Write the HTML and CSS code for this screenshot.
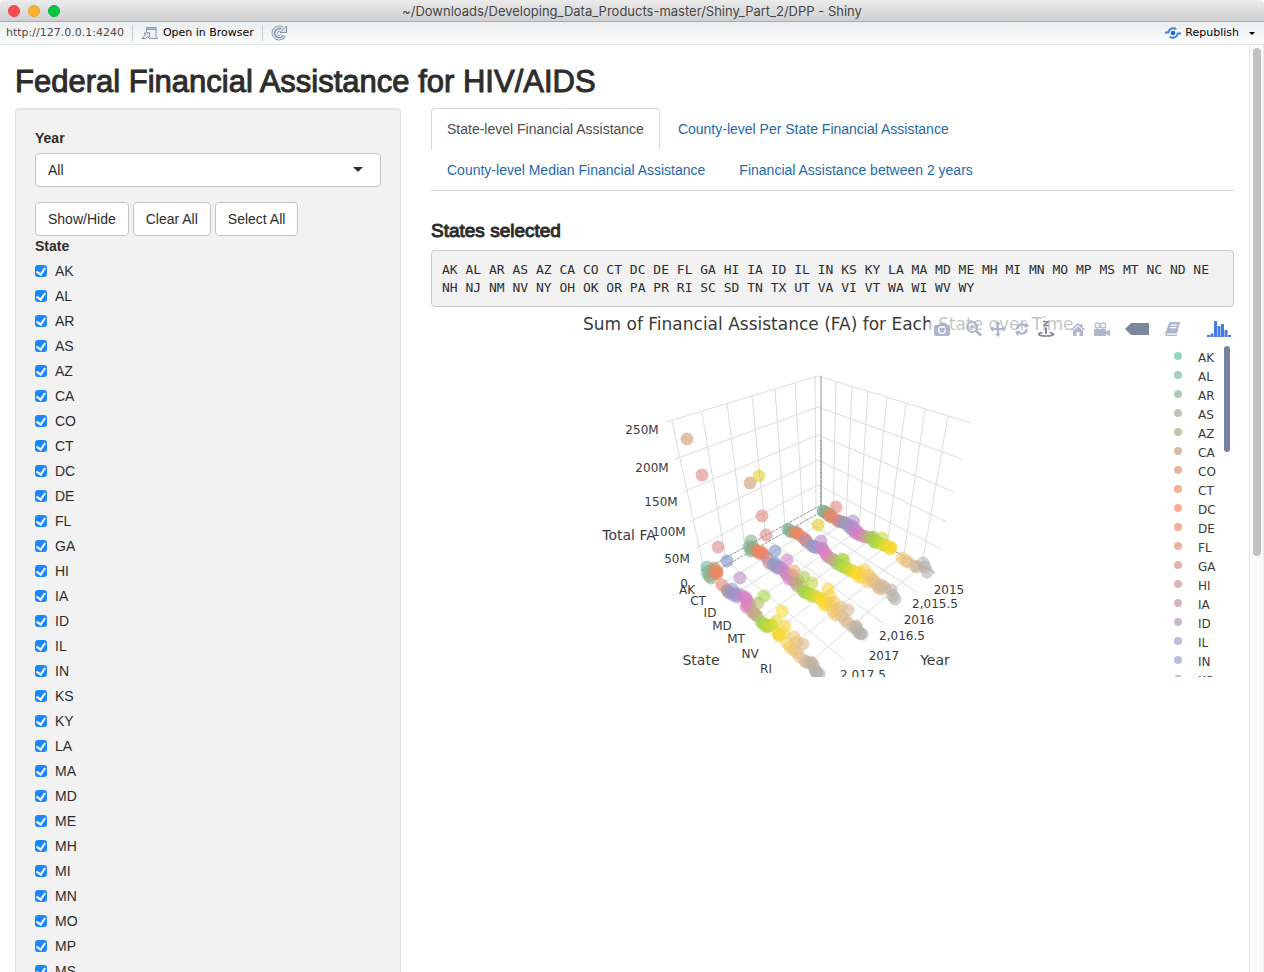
FILE: index.html
```
<!DOCTYPE html>
<html lang="en">
<head>
<meta charset="utf-8">
<title>~/Downloads/Developing_Data_Products-master/Shiny_Part_2/DPP - Shiny</title>
<link rel="stylesheet" href="styles.css">
</head>
<body>
<header class="titlebar">
  <div class="lights"><span class="light red"></span><span class="light amber"></span><span class="light green"></span></div>
  <div class="window-title">~/Downloads/Developing_Data_Products-master/Shiny_Part_2/DPP - Shiny</div>
</header>
<nav class="toolbar">
  <span class="url">http://127.0.0.1:4240</span>
  <span class="sep"></span>
  <button class="tool open" type="button">
    <svg width="18" height="14" viewBox="0 0 18 14"><path d="M5.500 1.500h9.500v9.500q0 1.500 2 1.500H8" fill="#eef4fa" stroke="#8a9bb0"/><path d="M5.500 1.500h9.500v2h-9.500z" fill="#a9cdeb" stroke="#8a9bb0"/><path d="M5.500 3v3" stroke="#8a9bb0"/><path d="M1 12.500l3.500-3.700L3 7.300l5.500-.5-.5 5-1.500-1.400-2 2.100z" fill="#fff" stroke="#6d8199"/></svg>
    Open in Browser</button>
  <span class="sep"></span>
  <button class="tool" type="button" aria-label="Reload">
    <svg width="17" height="16" viewBox="0 0 17 16"><path d="M11.500 3A6 6 0 1 0 13.500 10.500M10.500 10A3 3 0 1 1 9 5.500" fill="none" stroke="#8493ab" stroke-width="3"/><path d="M11.500 3A6 6 0 1 0 13.500 10.500M10.500 10A3 3 0 1 1 9 5.500" fill="none" stroke="#dbe6f5" stroke-width="1.400"/><path d="M15.500 1v6.500H9z" fill="#dbe6f5" stroke="#8493ab"/></svg>
  </button>
  <button class="tool republish" type="button">
    <svg width="16" height="12" viewBox="0 0 16 12"><circle cx="8" cy="6" r="2.300" fill="#1a66d9"/><path d="M0 5.500h3.200C4.200 2.500 6 1.300 8 1.300q2 0 3.300 1M16 6.500h-3.200C11.800 9.500 10 10.700 8 10.700q-2 0-3.300-1" fill="none" stroke="#3f83d6" stroke-width="1.900"/></svg>
    Republish
    <svg class="caret" width="6" height="3" viewBox="0 0 6 3"><path d="M0 0h6L3 3z"/></svg>
  </button>
</nav>
<div class="viewport">
  <div class="page">
    <h2 class="page-title">Federal Financial Assistance for HIV/AIDS</h2>
    <div class="columns">
      <form class="sidebar">
        <label class="field-label" for="year">Year</label>
        <div class="select-wrap"><select id="year"><option>All</option></select></div>
        <div class="buttons">
          <button class="btn" type="button">Show/Hide</button>
          <button class="btn" type="button">Clear All</button>
          <button class="btn" type="button">Select All</button>
        </div>
        <fieldset class="states">
          <legend class="field-label">State</legend>
          <div class="checks" id="checks"></div>
        </fieldset>
      </form>
      <main class="main">
        <ul class="tabs">
          <li><a class="active" href="#state">State-level Financial Assistance</a></li>
          <li><a href="#county">County-level Per State Financial Assistance</a></li>
          <li><a href="#median">County-level Median Financial Assistance</a></li>
          <li><a href="#between">Financial Assistance between 2 years</a></li>
        </ul>
        <h4 class="subhead">States selected</h4>
        <pre class="selected">AK AL AR AS AZ CA CO CT DC DE FL GA HI IA ID IL IN KS KY LA MA MD ME MH MI MN MO MP MS MT NC ND NE NH NJ NM NV NY OH OK OR PA PR RI SC SD TN TX UT VA VI VT WA WI WV WY</pre>
        <div class="plot">
          <svg class="chart" viewBox="431 307 803 370" role="img" aria-label="Sum of Financial Assistance for each state over time">
            <text class="chart-title" x="583" y="330">Sum of Financial Assistance (FA) for Each State over Time</text>
            <path class="grid" d="M666 422L818 376L971 423M675 459L818 407L962 459M683 492L818 435L954 492M690 522L818 460L947 522M696 548L818 485L941 549
              M672 421L704 570M702 412L726 561M727 403L745 549M752 396L766 538M775 389L785 527M795 383L803 518M815 376L816 510
              M836 381L833 516M852 386L846 522M868 391L859 530M887 397L873 538M906 403L887 546M925 409L904 554M948 416L922 565
              M803 518L917 592M785 528L900 607M766 538L883 623M745 549L865 641M727 561L844 660M704 573L820 677
              M718 586L833 516M730 597L846 522M743 609L859 530M757 621L873 538M772 634L887 546M788 649L904 554M807 665L922 565"/>
            <path class="axis" d="M821 376V507M820 511L935 573"/>
            <path class="axis dashed" d="M702 571L819 506M709 575L821 512M821 440V512"/>
            <g id="points" class="points"></g>
            <g class="ticks">
              <text x="642" y="434">250M</text><text x="652" y="472">200M</text><text x="661" y="506">150M</text><text x="669" y="536">100M</text><text x="677" y="563">50M</text><text x="684" y="588">0</text>
              <text x="687" y="594">AK</text><text x="698" y="605">CT</text><text x="710" y="617">ID</text><text x="722" y="630">MD</text><text x="736" y="643">MT</text><text x="750" y="658">NV</text><text x="766" y="673">RI</text>
              <text x="949" y="594">2015</text><text x="935" y="608">2,015.5</text><text x="919" y="624">2016</text><text x="902" y="640">2,016.5</text><text x="884" y="660">2017</text><text x="863" y="679">2,017.5</text>
            </g>
            <g class="axis-names"><text x="629" y="540">Total FA</text><text x="701" y="665">State</text><text x="935" y="665">Year</text></g>
            <g id="legend" class="legend"></g>
            <rect x="1224" y="346" width="6" height="106" rx="3" fill="#77829f"/>
          </svg>
          <div class="modebar">
            <div class="group"><button type="button" aria-label="Download plot"><svg width="16" height="14" viewBox="0 0 16 14"><path fill-rule="evenodd" d="M2 3h2.500L5.500 1h5l1 2H14q2 0 2 2v7q0 2-2 2H2q-2 0-2-2V5q0-2 2-2zm6 1a4 4 0 1 0 0 8 4 4 0 0 0 0-8z"/><circle cx="8" cy="8" r="2.600"/></svg></button></div>
            <div class="group">
              <button type="button" aria-label="Zoom"><svg width="16" height="16" viewBox="0 0 16 16"><path fill-rule="evenodd" d="M6 0a6 6 0 1 0 3.500 11L14 15.500l2-2L11.300 9A6 6 0 0 0 6 0zm0 2a4 4 0 1 1 0 8 4 4 0 0 1 0-8z"/><path d="M5.200 3.700h1.600v1.500h1.500v1.600H6.800v1.500H5.200V6.800H3.700V5.200h1.500z"/></svg></button>
              <button type="button" aria-label="Pan"><svg width="16" height="16" viewBox="0 0 16 16"><path d="M8 0l3 3.500H9V7h3.500V5L16 8l-3.500 3V9H9v3.500h2L8 16l-3-3.500h2V9H3.500v2L0 8l3.500-3v2H7V3.500H5z"/></svg></button>
              <button type="button" aria-label="Orbital rotation"><svg width="16" height="16" viewBox="0 0 16 16"><path d="M2 8a6 6 0 0 1 9-5l1.500-2L15 6l-5.500.5L10.500 5A4 4 0 0 0 4.500 8zM14 8a6 6 0 0 1-9 5l-1.500 2L1 10l5.500-.5L5.500 11A4 4 0 0 0 11.500 8z"/></svg></button>
              <button class="on" type="button" aria-label="Turntable rotation"><svg width="18" height="16" viewBox="0 0 18 16"><path d="M6.500 0h5v1.300L8.700 4h2.800v1.300h-5V4l2.800-2.700H6.500zM8 6.500h2V13H8z"/><path d="M5.500 11.500C-1 12.500 1 15 9 15s10-2.500 3.500-3.500" fill="none" stroke="#7d879d" stroke-width="1.600"/></svg></button>
            </div>
            <div class="group">
              <button type="button" aria-label="Reset camera"><svg width="14" height="14" viewBox="0 0 14 14"><path d="M7 1l2.500 2.300V2h2v3.200L14 7.500l-1 1-6-5.500-6 5.500-1-1zM7 4.200l5 4.500V14H8.500v-4h-3v4H2V8.700z"/></svg></button>
              <button type="button" aria-label="Last saved camera"><svg width="16" height="14" viewBox="0 0 16 14"><path d="M0 8q0-1 1-1h10q1 0 1 1v1.500l4-2V14l-4-2v2H1q-1 0-1-1z"/><circle cx="3.500" cy="3.500" r="2.600" fill="none" stroke="#aeb6cb" stroke-width="1.200"/><circle cx="9" cy="3.500" r="2.600" fill="none" stroke="#aeb6cb" stroke-width="1.200"/></svg></button>
            </div>
            <div class="group"><button class="on wide" type="button" aria-label="Show closest data on hover"><svg width="24" height="12" viewBox="0 0 24 12"><path d="M0 6l6-6h18v12H6z"/></svg></button></div>
            <div class="group"><button type="button" aria-label="Documentation"><svg width="15" height="14" viewBox="0 0 15 14"><path fill-rule="evenodd" d="M4.500 0H15l-3 11.500H2q-1 1 .5 1.200h9.200L12 14H2Q-.5 14 .3 11zM6 2.500l-.4 1.300h6.200l.4-1.300zM5.200 5l-.4 1.300H11l.4-1.300z"/></svg></button></div>
            <div class="group brand"><button class="wide" type="button" aria-label="Produced with Plotly"><svg width="24" height="16" viewBox="0 0 24 16"><path fill="#447bdc" d="M0 14h3v2H0zM3.500 12.500h3V16h-3zM7 0h3v16H7zM10.500 5h3v11h-3zM14 3h3v13h-3zM17.500 9h3v7h-3zM21 14h3v2h-3z"/></svg></button></div>
          </div>
        </div>
      </main>
    </div>
  </div>
  <div class="scrollbar"><div class="thumb"></div></div>
</div>
<script src="app.js"></script>
</body>
</html>
```
FILE: styles.css
```
* { box-sizing: border-box; }
body { margin: 0; height: 100vh; display: flex; flex-direction: column; overflow: hidden; background: #fff; color: #2d2d2d; font: 14px/20px "Liberation Sans", Arial, sans-serif; }
button { font: inherit; color: inherit; cursor: pointer; }

.titlebar { flex: none; display: grid; grid-template-columns: 1fr auto 1fr; align-items: center; height: 22px; background: linear-gradient(#ebebeb, #d0d0d0); border-bottom: 1px solid #acacac; border-radius: 5px 5px 0 0; }
.lights { display: flex; gap: 8px; padding-left: 8px; }
.light { width: 12px; height: 12px; border-radius: 50%; border: 1px solid; }
.red { background: #fc4a4f; border-color: #e5444a; }
.amber { background: #fdb22c; border-color: #e09f2a; }
.green { background: #05c63f; border-color: #06b038; }
.window-title { font: 13px/20px Inter, sans-serif; color: #464646; }

.toolbar { flex: none; display: flex; align-items: center; height: 23px; padding: 0 9px 0 6px; background: linear-gradient(#ebeef0, #fcfcfc); border-bottom: 1px solid #e2e4e5; font: 11px/20px "DejaVu Sans", sans-serif; }
.url { color: #4c4c4c; }
.sep { width: 1px; height: 16px; margin: 0 8px; background: #c8cbce; }
.tool { display: flex; align-items: center; gap: 4px; padding: 0; border: 0; background: none; color: #000; }
.republish { margin-left: auto; }
.caret { margin-left: 6px; }

.viewport { flex: 1; min-height: 0; display: flex; }
.page { flex: 1; min-width: 0; overflow: hidden; padding: 0 15px; }
.page-title { margin: 20px 0 10px; font-size: 31px; line-height: 33px; font-weight: 500; -webkit-text-stroke: 1px #2d2d2d; }
.columns { display: grid; grid-template-columns: minmax(0, 386fr) minmax(0, 803fr); gap: 30px; }
.scrollbar { flex: none; width: 15px; padding: 3px 3px 0; background: #fafafa; border-left: 1px solid #e6e6e6; border-right: 1px solid #ececec; }
.thumb { width: 8px; height: 55%; border-radius: 4px; background: #c1c1c1; }

.sidebar { padding: 19px; background: #f2f2f2; border: 1px solid #e0e0e0; border-radius: 4px; box-shadow: inset 0 1px 1px rgba(0, 0, 0, .05); }
.field-label { display: block; padding: 0; font-weight: bold; }
.select-wrap { position: relative; margin: 5px 0 15px; }
.select-wrap::after { content: ""; position: absolute; right: 18px; top: 14px; border: 5px solid transparent; border-top-color: #2d2d2d; border-bottom: 0; pointer-events: none; }
.select-wrap select { appearance: none; display: block; width: 100%; height: 34px; padding: 0 12px; border: 1px solid #c4c4c4; border-radius: 4px; background: #fff; color: inherit; font: inherit; }
.buttons { display: flex; gap: 4px; }
.btn { padding: 6px 12px; border: 1px solid #c4c4c4; border-radius: 4px; background: #fff; white-space: nowrap; }
.states { margin: 0; padding: 0; border: 0; }
.checks { display: grid; gap: 5px; padding-top: 5px; }
.checks label { display: flex; align-items: center; gap: 8px; }
.checks input { appearance: none; width: 12px; height: 12px; margin: 0; border-radius: 3px; background: #1b87fb; display: grid; place-items: center; }
.checks input:checked::after { content: ""; width: 4px; height: 7px; border: solid #fff; border-width: 0 2px 2px 0; transform: rotate(35deg); margin-bottom: 1px; }

.tabs { display: flex; flex-wrap: wrap; margin: 0; padding: 0; list-style: none; border-bottom: 1px solid #d9d9d9; }
.tabs li { margin: 0 2px -1px 0; }
.tabs a { display: block; padding: 10px 15px; border: 1px solid transparent; border-radius: 4px 4px 0 0; color: #2468ab; text-decoration: none; }
.tabs .active { color: #4c4c4c; background: #fff; border-color: #d9d9d9 #d9d9d9 transparent; }
.subhead { margin: 30px 0 9px; font-size: 19px; line-height: 20px; font-weight: 500; -webkit-text-stroke: 1px #2d2d2d; }
.selected { margin: 0; padding: 10px 10px 9px; background: #f2f2f2; border: 1px solid #c8c8c8; border-radius: 4px; font: 13px/18px "DejaVu Sans Mono", monospace; white-space: pre-wrap; }

.plot { position: relative; }
.chart { display: block; width: 100%; height: auto; font-family: "DejaVu Sans", sans-serif; fill: #3a3a3a; }
.chart-title { font-size: 17px; }
.grid { fill: none; stroke: #dcdcdc; stroke-width: 1; }
.axis { fill: none; stroke: #929292; stroke-width: 1; }
.dashed { stroke-dasharray: 3 1; }
.points { fill-opacity: .6; }
.ticks { font-size: 12px; text-anchor: middle; }
.axis-names { font-size: 14px; text-anchor: middle; }
.legend { font-size: 12px; }
.legend circle { fill-opacity: .65; }
.modebar { position: absolute; top: 9px; right: 0; display: flex; gap: 8px; height: 26px; background: rgba(255, 255, 255, .7); }
.group { display: flex; }
.brand { margin-left: 12px; }
.modebar button { display: flex; align-items: center; justify-content: center; width: 24px; padding: 0; border: 0; background: none; }
.modebar .wide { width: 30px; }
.modebar svg { fill: #aeb6cb; }
.modebar .on svg { fill: #7d879d; }
```
FILE: app.js
```
const states = document.querySelector('.selected').textContent.trim().split(/\s+/);
const palette = [[92,190,160],[255,127,88],[141,155,203],[224,125,195],[160,216,70],[255,217,47],[229,190,140],[175,175,175]];

function colour(t) {
  const p = Math.max(0, Math.min(1, t)) * 7;
  const i = Math.min(6, Math.floor(p));
  const c = palette[i].map((v, k) => Math.round(v + (palette[i + 1][k] - v) * (p - i)));
  return `rgb(${c.join(',')})`;
}

document.getElementById('checks').innerHTML = states
  .map(s => `<label><input type="checkbox" checked value="${s}">${s}</label>`).join('');

document.getElementById('legend').innerHTML = states.slice(0, 18)
  .map((s, i) => `<circle cx="1178" cy="${356 + 19 * i}" r="4" fill="${colour(i / 56)}"/><text x="1198" y="${362 + 19 * i}">${s}</text>`).join('');

/* One entry per year, back to front: screen x of the first and last state, then x,y of every marker. */
const years = [
  { from: 822, to: 928, at: '823,511 825,512 827,514 829,514 830,516 832,517 837,520 840,522 843,522 845,523 848,526 853,521 852,526 851,529 855,529 855,533 858,532 859,535 863,536 866,537 870,538 873,537 874,542 877,542 879,543 882,538 883,545 887,546 891,547 890,549 902,558 906,561 908,562 915,566 917,567 923,563 925,567 927,572' },
  { from: 787, to: 896, at: '788,529 791,532 794,532 797,533 798,534 802,537 805,539 807,542 812,546 815,547 821,541 817,548 822,548 823,550 826,554 828,557 832,559 835,561 837,564 842,559 844,560 840,565 843,567 847,568 849,570 853,571 855,573 857,573 860,572 859,577 865,570 863,578 869,575 868,582 872,579 875,582 878,587 882,585 880,589 885,588 891,590 893,596 895,599' },
  { from: 748, to: 863, at: '751,541 749,547 751,551 753,547 756,550 759,553 761,552 763,554 767,558 769,563 773,565 775,563 777,568 779,567 782,569 787,560 785,571 787,575 789,579 792,575 793,580 796,583 798,580 797,586 804,577 802,587 803,591 806,593 808,593 812,583 811,596 814,595 817,597 828,589 820,598 823,600 824,605 827,602 830,596 831,605 834,602 833,612 836,615 837,610 841,607 842,616 848,610 845,620 848,623 853,627 856,626 857,630 859,633 862,634' },
  { from: 706, to: 820, at: '707,567 707,572 709,576 712,570 711,578 714,568 716,573 717,571 717,574 722,585 727,590 729,593 732,589 733,595 736,593 737,597 740,578 741,595 745,597 747,600 746,607 748,603 750,606 752,612 754,613 757,616 758,603 761,622 764,596 763,624 765,624 767,627 769,626 772,625 776,621 782,611 778,633 779,636 785,626 784,633 787,643 790,647 793,650 794,637 797,642 797,653 803,644 800,657 805,661 808,663 811,662 813,665 815,670 817,673 819,674' }
];
/* Markers high above the floor, with their own colour. */
const high = [
  [687,439,'#cf9873'], [702,475,'#e0877c'], [750,483,'#cf9873'], [759,476,'#dfd12c'], [762,516,'#e0877c'],
  [718,547,'#d98a88'], [766,535,'#d98a88'], [836,507,'#e0877c'], [818,525,'#dfd12c'], [794,571,'#e0ac74'],
  [727,561,'#8292c6'], [775,551,'#8292c6']
];

const spread = s => 1.3 * s / (1 + 0.3 * s);
const dot = (x, y, c) => `<circle cx="${x}" cy="${y}" r="6.5" fill="${c}"/>`;

/* Neighbouring states sit almost on top of each other; the ones between two close markers are filled in. */
function row({ from, to, at }) {
  const pts = at.split(' ').map(p => p.split(',').map(Number));
  const all = [];
  pts.forEach(([x, y], i) => {
    all.push([x, y]);
    const n = pts[i + 1];
    if (n && i % 2 === 0 && Math.hypot(n[0] - x, n[1] - y) < 5) all.push([(x + n[0]) / 2, (y + n[1]) / 2]);
  });
  return all.map(([x, y]) => dot(x, y, colour(spread((x - from) / (to - from))))).join('');
}

document.getElementById('points').innerHTML = years.map(row).join('') + high.map(h => dot(...h)).join('');
```
